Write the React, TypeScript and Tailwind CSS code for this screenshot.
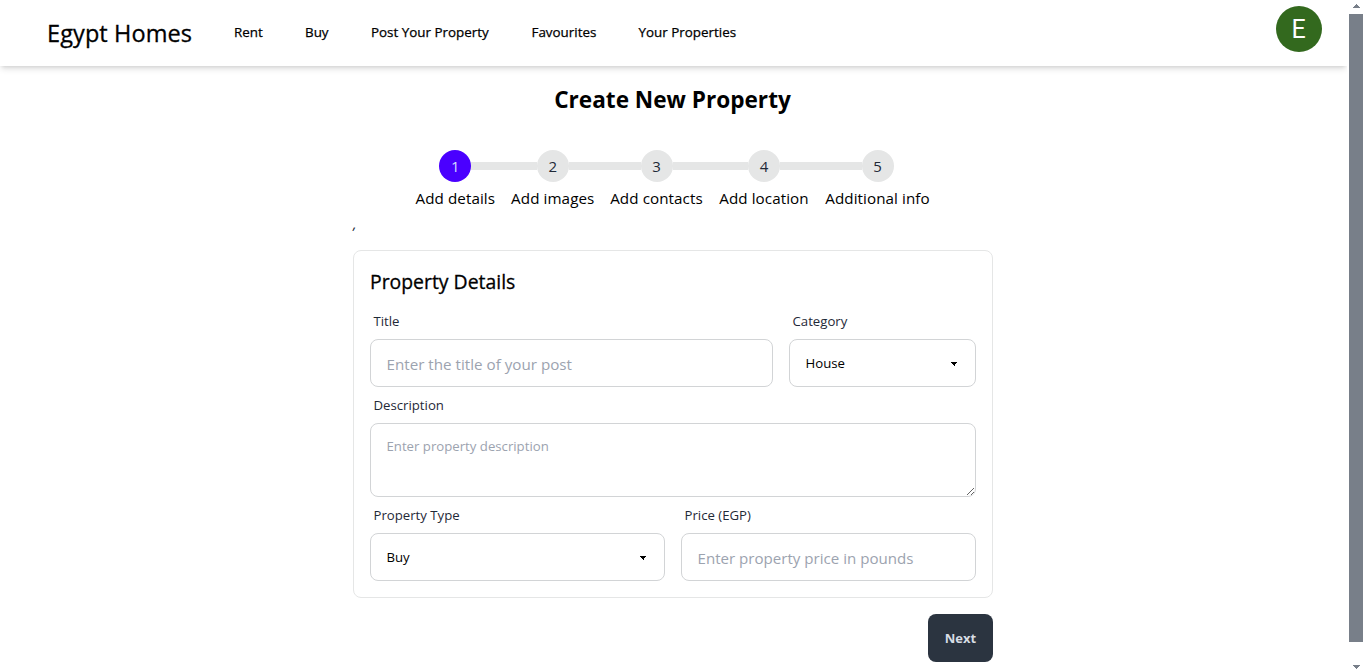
import { useState } from "react";
import type { ReactNode } from "react";
import clsx from "clsx";

const navLinks = [
  { label: "Rent", style: "mr-[42px] w-[29px]" },
  { label: "Buy", style: "mr-[42px] w-[24px]" },
  { label: "Post Your Property", style: "mr-[42px] w-[118.5px]" },
  { label: "Favourites", style: "mr-[42px] w-[65px]" },
  { label: "Your Properties", style: "w-[98px]" },
];

const steps = [
  { label: "Add details", width: "w-[95.5px]", active: true },
  { label: "Add images", width: "w-[99.5px]", active: false },
  { label: "Add contacts", width: "w-[108px]", active: false },
  { label: "Add location", width: "w-[107px]", active: false },
  { label: "Additional info", width: "w-[120px]", active: false },
];

const fieldBox = "rounded-lg border border-[#d2d4d6] bg-white";

function Navbar() {
  return (
    <header className="flex h-[66px] shrink-0 items-start bg-white pr-[25px] pl-[47px] shadow-[0_4px_6px_-1px_rgba(0,0,0,0.12),0_2px_4px_-2px_rgba(0,0,0,0.12)]">
      <a className="mt-[17px] mr-[42px] w-[145px] text-[23.5px] leading-8 tracking-[0.1px] whitespace-nowrap text-black [-webkit-text-stroke:0.3px_#000]">
        Egypt Homes
      </a>
      <nav className="mt-[22px] flex text-[13.4px] leading-5 text-black [-webkit-text-stroke:0.25px_#000]">
        {navLinks.map((link) => (
          <a key={link.label} className={clsx("whitespace-nowrap", link.style)}>
            {link.label}
          </a>
        ))}
      </nav>
      <div className="mt-[6px] ml-auto flex size-[46px] items-center justify-center rounded-full bg-[#33691e] pt-[2px] pr-px font-['Roboto'] text-[25px] text-white">
        E
      </div>
    </header>
  );
}

function Steps() {
  return (
    <ol className="flex justify-center pr-px">
      {steps.map((step, i) => (
        <li key={step.label} className={clsx("flex flex-col items-center", step.width)}>
          <div className="flex h-8 w-full items-center">
            <span className={clsx("h-2 flex-1", i > 0 && "bg-[#e5e6e6]")} />
            <span
              className={clsx(
                "flex size-8 items-center justify-center rounded-full text-[15px]",
                step.active ? "bg-[#4a00ff] text-[#d1dbff]" : "bg-[#e5e6e6] text-[#1f2937]",
              )}
            >
              {i + 1}
            </span>
            <span className={clsx("h-2 flex-1", i < steps.length - 1 && "bg-[#e5e6e6]")} />
          </div>
          <span className="mt-1 text-[15.2px] leading-6 tracking-[0.08px] whitespace-nowrap text-black">
            {step.label}
          </span>
        </li>
      ))}
    </ol>
  );
}

function Field({ label, className, children }: { label: string; className?: string; children: ReactNode }) {
  return (
    <div className={clsx("flex flex-col", className)}>
      <span className="px-[3.5px] py-2 text-[13.2px] leading-5 text-[#1f2937]">{label}</span>
      {children}
    </div>
  );
}

function Select({ value }: { value: string }) {
  return (
    <button type="button" className={clsx("flex h-12 items-center justify-between pr-[18px] pl-[15.5px]", fieldBox)}>
      <span className="text-[13.2px] leading-5 text-black">{value}</span>
      <svg className="mt-px h-1 w-[6px]" viewBox="0 0 6 4" shapeRendering="crispEdges">
        <path d="M0 0h6v1H5v1H4v2H3V3H2V2H1V1H0z" fill="#000" />
      </svg>
    </button>
  );
}

function Scrollbar() {
  return (
    <div className="flex w-4 shrink-0 flex-col items-end bg-white">
      <div className="flex h-[14px] w-[14px] items-start justify-center pt-1">
        <svg className="h-1 w-[7px]" viewBox="0 0 7 4" shapeRendering="crispEdges">
          <path d="M0 4V3h1V2h1V1h1V0h1v1h1v1h1v1h1v1z" fill="#787f89" />
        </svg>
      </div>
      <div className="h-[628px] w-[14px] bg-[#787f89]" />
      <div className="flex w-[14px] flex-1 items-end justify-center pb-[2px]">
        <svg className="h-1 w-[7px]" viewBox="0 0 7 4" shapeRendering="crispEdges">
          <path d="M0 0h7v1H6v1H5v1H4v1H3V3H2V2H1V1H0z" fill="#787f89" />
        </svg>
      </div>
    </div>
  );
}

export default function App() {
  const [title, setTitle] = useState("");
  const [price, setPrice] = useState("");
  const [description, setDescription] = useState("");

  return (
    <div className="flex h-[671px] overflow-hidden bg-white font-['Open_Sans','Noto_Sans',sans-serif]">
      <div className="flex min-w-0 flex-1 flex-col">
        <Navbar />
        <main className="ml-[353px] flex w-[640px] flex-col">
          <h1 className="mt-[18px] pr-px text-center text-[22.6px] leading-8 font-bold text-black">
            Create New Property
          </h1>
          <div className="mt-[34px]">
            <Steps />
          </div>
          <div className="h-10 pt-1 text-[14px] leading-5 text-[#1f2937] italic">,</div>
          <section className="flex h-[348px] flex-col rounded-lg border border-[#e5e6e6] px-4 pt-4">
            <h2 className="text-[19.4px] leading-[30px] text-black [-webkit-text-stroke:0.3px_#000]">
              Property Details
            </h2>
            <div className="mt-[6px] flex gap-4">
              <Field label="Title" className="w-[403px]">
                <input
                  value={title}
                  onChange={(e) => setTitle(e.target.value)}
                  placeholder="Enter the title of your post"
                  className={clsx("h-12 px-[15.5px] pt-px text-[15.2px] placeholder:text-[#9ca3af]", fieldBox)}
                />
              </Field>
              <Field label="Category" className="flex-1">
                <Select value="House" />
              </Field>
            </div>
            <Field label="Description">
              <textarea
                value={description}
                onChange={(e) => setDescription(e.target.value)}
                placeholder="Enter property description"
                className={clsx(
                  "block h-[74px] px-[15.5px] py-3 text-[13.2px] leading-5 placeholder:text-[#9ca3af]",
                  fieldBox,
                )}
              />
            </Field>
            <div className="flex gap-4">
              <Field label="Property Type" className="flex-1">
                <Select value="Buy" />
              </Field>
              <Field label="Price (EGP)" className="flex-1">
                <input
                  value={price}
                  onChange={(e) => setPrice(e.target.value)}
                  placeholder="Enter property price in pounds"
                  className={clsx("h-12 w-full px-[15.5px] pt-px text-[15.1px] placeholder:text-[#9ca3af]", fieldBox)}
                />
              </Field>
            </div>
          </section>
          <button
            type="button"
            className="mt-4 h-12 w-[65px] self-end rounded-lg bg-[#2b3440] pt-px text-[13px] font-bold text-[#d7dde4]"
          >
            Next
          </button>
        </main>
      </div>
      <Scrollbar />
    </div>
  );
}
